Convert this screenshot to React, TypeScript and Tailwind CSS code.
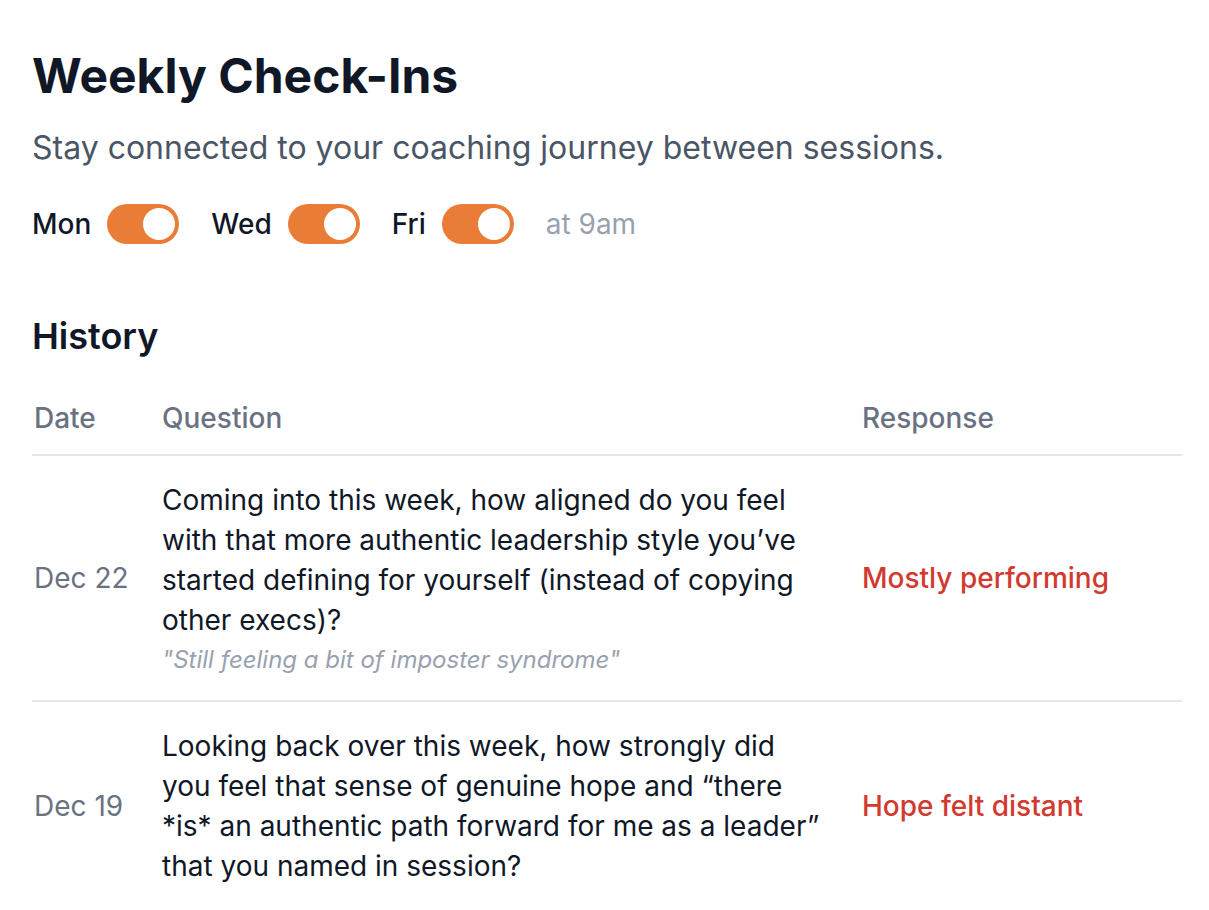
import { useState } from 'react';

type CheckIn = {
  date: string;
  question: string;
  note?: string;
  response: string;
};

const history: CheckIn[] = [
  {
    date: 'Dec 22',
    question:
      'Coming into this week, how aligned do you feel with that more authentic leadership style you’ve started defining for yourself (instead of copying other execs)?',
    note: '"Still feeling a bit of imposter syndrome"',
    response: 'Mostly performing',
  },
  {
    date: 'Dec 19',
    question:
      'Looking back over this week, how strongly did you feel that sense of genuine hope and “there *is* an authentic path forward for me as a leader” that you named in session?',
    response: 'Hope felt distant',
  },
];

function Toggle({ on, onChange }: { on: boolean; onChange: () => void }) {
  return (
    <button
      type="button"
      onClick={onChange}
      className={`flex h-[40px] w-[72px] items-center rounded-full p-[4px] transition-colors ${
        on ? 'justify-end bg-[#e97d37]' : 'justify-start bg-gray-200'
      }`}
    >
      <span className="h-[32px] w-[32px] rounded-full bg-white" />
    </button>
  );
}

export default function App() {
  const [days, setDays] = useState({ Mon: true, Wed: true, Fri: true });

  return (
    <div className="min-h-screen bg-white px-8 pt-12 font-['Inter',sans-serif] text-gray-900">
      <h1 className="text-[48px] font-bold leading-[56px]">Weekly Check-Ins</h1>
      <p className="mt-[20px] text-[32px] leading-[48px] text-gray-600">
        Stay connected to your coaching journey between sessions.
      </p>

      {/* Schedule */}
      <div className="mt-[32px] flex h-[40px] items-center">
        {(Object.keys(days) as (keyof typeof days)[]).map((d) => (
          <div key={d} className="mr-[32px] flex items-center gap-4">
            <span className="text-[28px] font-medium leading-[40px]">{d}</span>
            <Toggle on={days[d]} onChange={() => setDays((p) => ({ ...p, [d]: !p[d] }))} />
          </div>
        ))}
        <span className="text-[28px] leading-[40px] text-gray-400">at 9am</span>
      </div>

      {/* History */}
      <h2 className="mt-[68px] text-[36px] font-semibold leading-[48px]">History</h2>

      <div className="mt-[38px] w-[1150px]">
        <div className="grid grid-cols-[130px_700px_1fr] border-b-2 border-gray-200 pb-4 text-[28px] font-medium leading-[40px] text-gray-500">
          <div className="pl-0.5">Date</div>
          <div>Question</div>
          <div>Response</div>
        </div>
        {history.map((row) => (
          <div
            key={row.date}
            className="grid grid-cols-[130px_700px_1fr] items-center border-b-2 border-gray-200 py-6"
          >
            <div className="pl-0.5 text-[28px] leading-[40px] text-gray-500">{row.date}</div>
            <div className="w-[664px]">
              <p className="text-[28px] leading-[40px] text-gray-900">{row.question}</p>
              {row.note && (
                <p className="mt-1 text-[24px] italic leading-[32px] text-gray-400">{row.note}</p>
              )}
            </div>
            <div className="text-[28px] font-medium leading-[40px] text-[#d13a2f]">{row.response}</div>
          </div>
        ))}
      </div>
    </div>
  );
}
